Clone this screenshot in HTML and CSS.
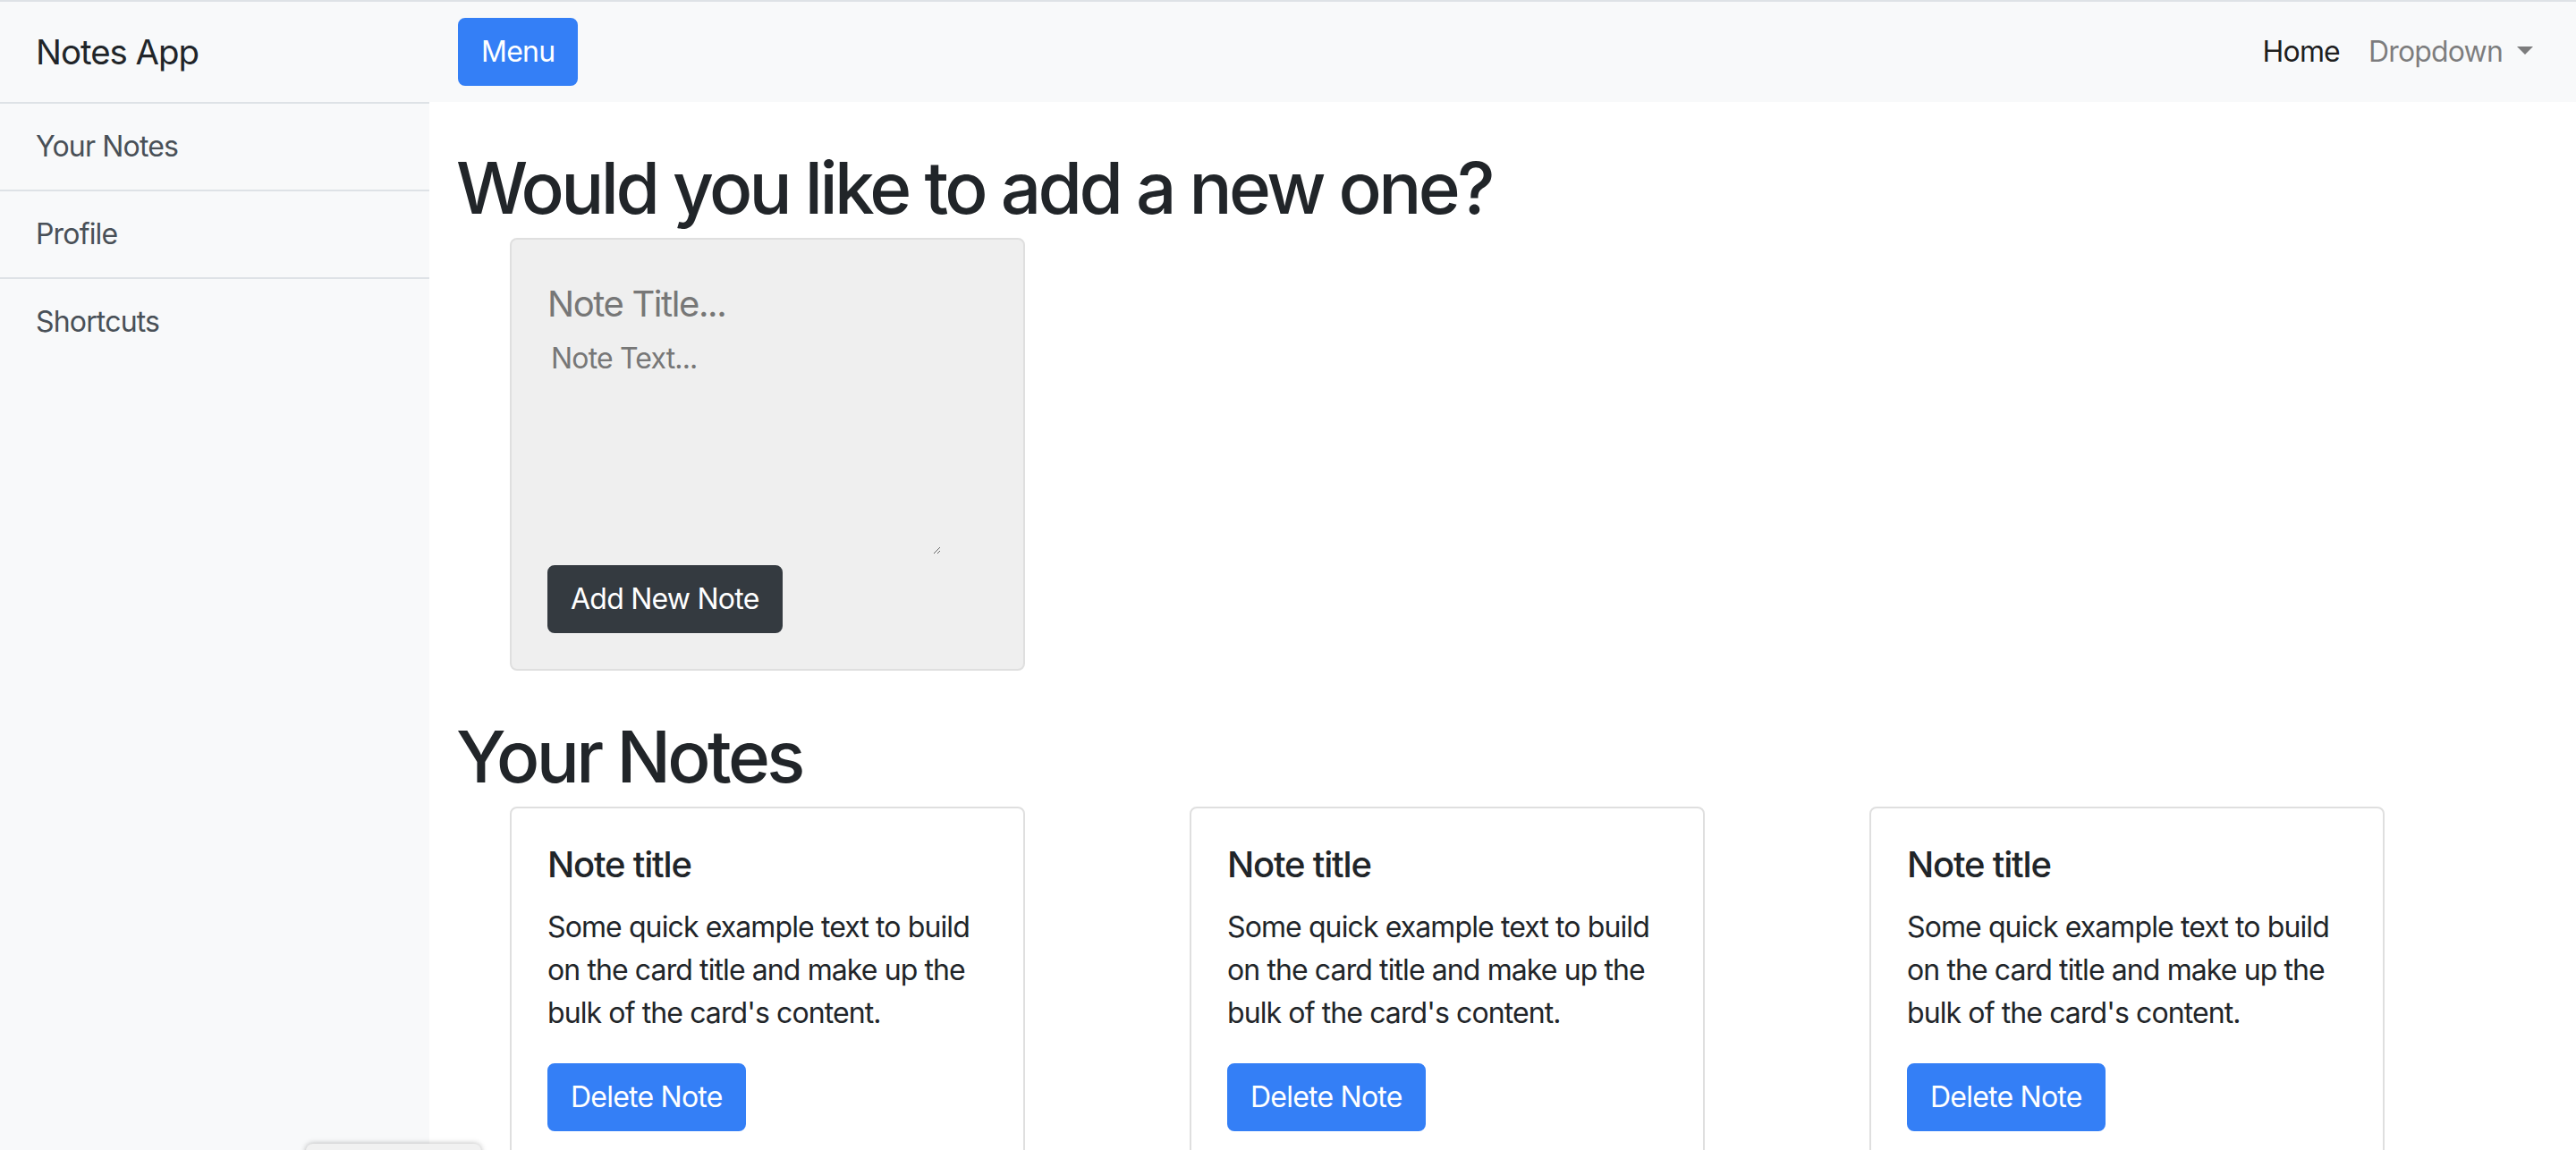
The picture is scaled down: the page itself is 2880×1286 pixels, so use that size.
FILE: index.html
```html
<!DOCTYPE html>
<html lang="en">
<head>
<meta charset="utf-8">
<title>Notes App</title>
<link rel="stylesheet" href="styles.css">
</head>
<body>
<div class="wrapper">
  <aside class="sidebar">
    <div class="sidebar-heading">Notes App</div>
    <div class="list-group">
      <a class="list-item" href="#">Your Notes</a>
      <a class="list-item" href="#">Profile</a>
      <a class="list-item" href="#">Shortcuts</a>
    </div>
  </aside>
  <div class="main">
    <nav class="navbar">
      <button class="btn btn-primary">Menu</button>
      <ul class="nav">
        <li><a class="nav-link active" href="#">Home</a></li>
        <li><a class="nav-link dropdown" href="#">Dropdown</a></li>
      </ul>
    </nav>
    <div class="content">
      <h1 class="page-title">Would you like to add a new one?</h1>
      <div class="container">
        <div class="card card-form">
          <div class="card-body">
            <input class="title-input" type="text" placeholder="Note Title...">
            <textarea class="text-input" placeholder="Note Text..."></textarea>
            <button class="btn btn-dark">Add New Note</button>
          </div>
        </div>
      </div>
      <h1 class="page-title">Your Notes</h1>
      <div class="container">
        <div class="notes-row">
          <div class="col">
            <div class="card">
              <div class="card-body">
                <h5 class="card-title">Note title</h5>
                <p class="card-text">Some quick example text to build on the card title and make up the bulk of the card's content.</p>
                <button class="btn btn-primary">Delete Note</button>
              </div>
            </div>
          </div>
          <div class="col">
            <div class="card">
              <div class="card-body">
                <h5 class="card-title">Note title</h5>
                <p class="card-text">Some quick example text to build on the card title and make up the bulk of the card's content.</p>
                <button class="btn btn-primary">Delete Note</button>
              </div>
            </div>
          </div>
          <div class="col">
            <div class="card">
              <div class="card-body">
                <h5 class="card-title">Note title</h5>
                <p class="card-text">Some quick example text to build on the card title and make up the bulk of the card's content.</p>
                <button class="btn btn-primary">Delete Note</button>
              </div>
            </div>
          </div>
        </div>
      </div>
    </div>
  </div>
</div>
<div class="floating-tab"></div>
</body>
</html>
```
FILE: styles.css
```css
* { box-sizing: border-box; }
html, body { margin: 0; padding: 0; }
body {
  font-family: Inter, "Noto Sans", "Liberation Sans", sans-serif;
  font-size: 32px;
  line-height: 48px;
  color: #212529;
  background: #fff;
}
.wrapper {
  display: flex;
  border-top: 2px solid #dee2e6;
  min-height: 1400px;
}
.sidebar {
  width: 480px;
  flex-shrink: 0;
  background: #f8f9fa;
}
.sidebar-heading {
  padding: 28px 40px;
  font-size: 38.4px;
  line-height: 56px;
  letter-spacing: -0.026em;
  color: #212529;
}
.list-group { display: flex; flex-direction: column; }
.list-item {
  display: block;
  padding: 24px 40px;
  border-top: 2px solid #dee2e6;
  color: #495057;
  text-decoration: none;
  font-size: 32px;
  line-height: 48px;
  letter-spacing: -0.026em;
}
.main { flex: 1; min-width: 0; }
.navbar {
  height: 112px;
  background: #f8f9fa;
  padding: 0 32px;
  display: flex;
  align-items: center;
  justify-content: space-between;
}
.nav { list-style: none; margin: 0; padding: 0; display: flex; }
.nav-link {
  display: block;
  padding: 16px;
  color: rgba(0,0,0,.5);
  text-decoration: none;
  letter-spacing: -0.026em;
}
.nav-link.active { color: rgba(0,0,0,.9); }
.dropdown::after {
  content: "";
  display: inline-block;
  margin-left: 16px;
  vertical-align: 8px;
  border-top: 9.6px solid;
  border-right: 9.6px solid transparent;
  border-left: 9.6px solid transparent;
}
.btn {
  font-family: inherit;
  font-size: 32px;
  line-height: 48px;
  letter-spacing: -0.024em;
  padding: 12px 24px;
  border: 2px solid transparent;
  border-radius: 8px;
  color: #fff;
  cursor: pointer;
}
.btn-primary { background: #347ff6; border-color: #347ff6; }
.btn-dark { background: #343a40; border-color: #343a40; display: block; margin-top: 12px; }
.content { padding: 0 30px; }
.page-title {
  font-size: 80px;
  font-weight: 500;
  line-height: 96px;
  letter-spacing: -0.045em;
  margin: 48px 0 8px;
}
.container { max-width: 2280px; margin: 0 auto; padding: 0 30px; }
.card {
  width: 576px;
  border: 2px solid #dfdfdf;
  border-radius: 8px;
  background: #fff;
}
.card-form { background: #efefef; }
.card-body { padding: 40px; }
.title-input {
  display: block;
  width: 100%;
  height: 62px;
  border: 0;
  padding: 0;
  background: transparent;
  font-family: inherit;
  font-size: 40px;
  letter-spacing: -0.035em;
  color: #212529;
  outline: none;
}
.title-input::placeholder, .text-input::placeholder { color: #777; }
.text-input {
  display: block;
  width: 440px;
  height: 242px;
  margin-top: 8px;
  padding: 4px;
  border: 0;
  background: transparent;
  font-family: inherit;
  font-size: 32px;
  line-height: 38px;
  letter-spacing: -0.026em;
  color: #212529;
  outline: none;
}
.notes-row {
  display: grid;
  grid-template-columns: repeat(3, 1fr);
  margin: 0 -30px;
}
.col { padding: 0 30px; }
.card-title {
  font-size: 40px;
  font-weight: 500;
  line-height: 46px;
  letter-spacing: -0.03em;
  margin: 0 0 23px;
}
.card-text { margin: 0 0 32px; letter-spacing: -0.028em; }
.floating-tab {
  position: fixed;
  left: 342px;
  top: 1279px;
  width: 196px;
  height: 40px;
  background: #f1f1f1;
  border-radius: 8px 8px 0 0;
  box-shadow: 0 0 6px rgba(0,0,0,.3);
}
```
